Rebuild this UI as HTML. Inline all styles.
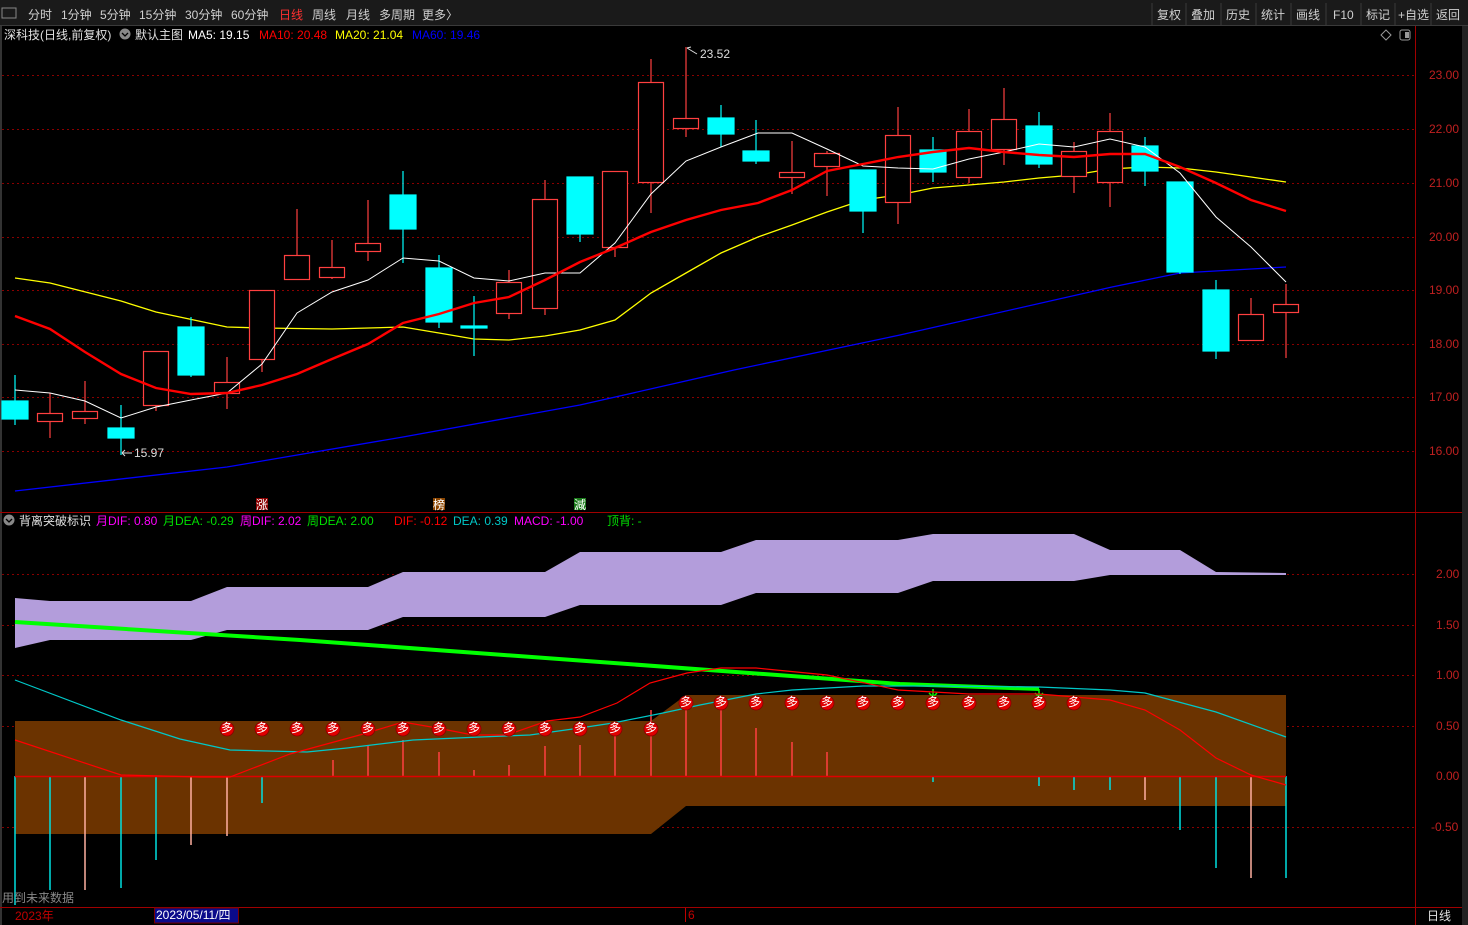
<!DOCTYPE html>
<html><head><meta charset="utf-8"><style>
html,body{margin:0;padding:0;background:#000;width:1468px;height:925px;overflow:hidden;font-family:"Liberation Sans","Noto Sans CJK SC",sans-serif;}
svg{display:block}
text{font-family:"Liberation Sans","Noto Sans CJK SC",sans-serif;font-size:12px}
</style></head><body>
<svg width="1468" height="925" viewBox="0 0 1468 925">
<rect width="1468" height="925" fill="#000"/>
<!-- top bar -->
<rect x="0" y="0" width="1468" height="25" fill="#1a1a1a"/>
<line x1="0" y1="25.5" x2="1468" y2="25.5" stroke="#3a3a3a"/>
<rect x="2" y="8" width="14" height="10" fill="none" stroke="#888" stroke-width="1"/>
<g fill="#d0d0d0">
<text x="28" y="19">分时</text><text x="61" y="19">1分钟</text><text x="100" y="19">5分钟</text><text x="139" y="19">15分钟</text><text x="185" y="19">30分钟</text><text x="231" y="19">60分钟</text>
<text x="279" y="19" fill="#ff3030">日线</text><text x="312" y="19">周线</text><text x="346" y="19">月线</text><text x="379" y="19">多周期</text><text x="422" y="19">更多〉</text>
<text x="1157" y="19">复权</text><text x="1191" y="19">叠加</text><text x="1226" y="19">历史</text><text x="1261" y="19">统计</text><text x="1296" y="19">画线</text><text x="1333" y="19">F10</text><text x="1366" y="19">标记</text><text x="1398" y="19">+自选</text><text x="1436" y="19">返回</text>
</g>
<g stroke="#3a3a3a"><line x1="1152" y1="3" x2="1152" y2="25"/><line x1="1186" y1="3" x2="1186" y2="25"/><line x1="1221" y1="3" x2="1221" y2="25"/><line x1="1256" y1="3" x2="1256" y2="25"/><line x1="1291" y1="3" x2="1291" y2="25"/><line x1="1326" y1="3" x2="1326" y2="25"/><line x1="1361" y1="3" x2="1361" y2="25"/><line x1="1395" y1="3" x2="1395" y2="25"/><line x1="1431" y1="3" x2="1431" y2="25"/></g>
<!-- frame -->
<rect x="0" y="26" width="2" height="899" fill="#333"/>
<rect x="1462" y="26" width="6" height="899" fill="#222"/>
<line x1="1415.5" y1="26" x2="1415.5" y2="925" stroke="#a00000"/>
<line x1="0" y1="512.5" x2="1462" y2="512.5" stroke="#a00000"/>
<line x1="0" y1="907.5" x2="1462" y2="907.5" stroke="#a00000"/>
<!-- legend -->
<text x="4" y="39" fill="#e0e0e0">深科技(日线,前复权)</text>
<circle cx="125" cy="34" r="5.5" fill="#888"/><path d="M122 33 l3 3 l3 -3" stroke="#000" fill="none" stroke-width="1.3"/>
<text x="135" y="39" fill="#e0e0e0">默认主图</text>
<text x="188" y="39" fill="#fff">MA5: 19.15</text>
<text x="259" y="39" fill="#ff0000">MA10: 20.48</text>
<text x="335" y="39" fill="#ffff00">MA20: 21.04</text>
<text x="412" y="39" fill="#0000ff">MA60: 19.46</text>
<path d="M1386 30 l5 5 l-5 5 l-5 -5 z" fill="none" stroke="#999"/>
<rect x="1400" y="30" width="10" height="10" rx="2" fill="none" stroke="#999"/><rect x="1405" y="32" width="4" height="6" fill="#999"/>
<!-- grid -->
<g stroke="#8a0000" stroke-dasharray="2,3">
<line x1="2" y1="75.5" x2="1415" y2="75.5"/><line x1="2" y1="129.5" x2="1415" y2="129.5"/><line x1="2" y1="183.5" x2="1415" y2="183.5"/><line x1="2" y1="237.5" x2="1415" y2="237.5"/><line x1="2" y1="290.5" x2="1415" y2="290.5"/><line x1="2" y1="344.5" x2="1415" y2="344.5"/><line x1="2" y1="397.5" x2="1415" y2="397.5"/><line x1="2" y1="451.5" x2="1415" y2="451.5"/>
<line x1="2" y1="574.5" x2="1415" y2="574.5"/><line x1="2" y1="625.5" x2="1415" y2="625.5"/><line x1="2" y1="675.5" x2="1415" y2="675.5"/><line x1="2" y1="726.5" x2="1415" y2="726.5"/><line x1="2" y1="827.5" x2="1415" y2="827.5"/>
</g>
<g fill="#c02020" font-size="12">
<text x="1429" y="79">23.00</text><text x="1429" y="133">22.00</text><text x="1429" y="187">21.00</text><text x="1429" y="241">20.00</text><text x="1429" y="294">19.00</text><text x="1429" y="348">18.00</text><text x="1429" y="401">17.00</text><text x="1429" y="455">16.00</text>
<text x="1436" y="578">2.00</text><text x="1436" y="629">1.50</text><text x="1436" y="679">1.00</text><text x="1436" y="730">0.50</text><text x="1436" y="780">0.00</text><text x="1431" y="831">-0.50</text>
</g>
<!-- MA lines -->
<polyline fill="none" stroke="#0000ff" stroke-width="1.3" points="15,491 227,467 403,437 580,405 734,370 900,335 1112,287 1180,273 1286,267"/>
<polyline fill="none" stroke="#ffff00" stroke-width="1.3" points="15,278 50,283 121,301 156,312 227,327 262,328 332,329 403,327 439,333 474,339 509,340 545,336 580,330 615,320 651,293 686,273 721,253 758,237 792,225 827,212 863,200 898,195 933,188 969,185 1004,182 1039,178 1074,175 1110,169 1145,167 1180,168 1216,172 1251,177 1286,182"/>
<!-- candles -->
<g stroke-width="1.2">
<g stroke="#00ffff" fill="#00ffff">
<line x1="15" y1="375" x2="15" y2="425"/><rect x="2" y="401" width="26" height="18"/>
<line x1="121" y1="405" x2="121" y2="455"/><rect x="108" y="428" width="26" height="10"/>
<line x1="191" y1="317" x2="191" y2="377"/><rect x="178" y="327" width="26" height="48"/>
<line x1="403" y1="171" x2="403" y2="263"/><rect x="390" y="195" width="26" height="34"/>
<line x1="439" y1="255" x2="439" y2="328"/><rect x="426" y="268" width="26" height="54"/>
<line x1="474" y1="296" x2="474" y2="356"/><rect x="461" y="326" width="26" height="2"/>
<line x1="580" y1="177" x2="580" y2="242"/><rect x="567" y="177" width="26" height="57"/>
<line x1="721" y1="105" x2="721" y2="147"/><rect x="708" y="118" width="26" height="16"/>
<line x1="756" y1="120" x2="756" y2="164"/><rect x="743" y="151" width="26" height="10"/>
<line x1="863" y1="170" x2="863" y2="233"/><rect x="850" y="170" width="26" height="41"/>
<line x1="933" y1="137" x2="933" y2="182"/><rect x="920" y="150" width="26" height="22"/>
<line x1="1039" y1="112" x2="1039" y2="168"/><rect x="1026" y="126" width="26" height="38"/>
<line x1="1145" y1="137" x2="1145" y2="186"/><rect x="1132" y="146" width="26" height="25"/>
<line x1="1180" y1="182" x2="1180" y2="274"/><rect x="1167" y="182" width="26" height="90"/>
<line x1="1216" y1="280" x2="1216" y2="359"/><rect x="1203" y="290" width="26" height="61"/>
</g>
<g stroke="#ff4040" fill="#000">
<line x1="50" y1="393" x2="50" y2="438"/><rect x="37.5" y="413.5" width="25" height="8"/>
<line x1="85" y1="381" x2="85" y2="424"/><rect x="72.5" y="411.5" width="25" height="7"/>
<line x1="156" y1="351" x2="156" y2="411"/><rect x="143.5" y="351.5" width="25" height="54"/>
<line x1="227" y1="357" x2="227" y2="409"/><rect x="214.5" y="382.5" width="25" height="11"/>
<line x1="262" y1="290" x2="262" y2="372"/><rect x="249.5" y="290.5" width="25" height="69"/>
<line x1="297" y1="209" x2="297" y2="280"/><rect x="284.5" y="255.5" width="25" height="24"/>
<line x1="332" y1="240" x2="332" y2="279"/><rect x="319.5" y="267.5" width="25" height="10"/>
<line x1="368" y1="200" x2="368" y2="261"/><rect x="355.5" y="243.5" width="25" height="8"/>
<line x1="509" y1="270" x2="509" y2="319"/><rect x="496.5" y="282.5" width="25" height="31"/>
<line x1="545" y1="180" x2="545" y2="315"/><rect x="532.5" y="199.5" width="25" height="109"/>
<line x1="615" y1="171" x2="615" y2="257"/><rect x="602.5" y="171.5" width="25" height="76"/>
<line x1="651" y1="59" x2="651" y2="213"/><rect x="638.5" y="82.5" width="25" height="100"/>
<line x1="686" y1="47" x2="686" y2="137"/><rect x="673.5" y="118.5" width="25" height="10"/>
<line x1="792" y1="141" x2="792" y2="194"/><rect x="779.5" y="172.5" width="25" height="5"/>
<line x1="827" y1="151" x2="827" y2="196"/><rect x="814.5" y="153.5" width="25" height="13"/>
<line x1="898" y1="107" x2="898" y2="224"/><rect x="885.5" y="135.5" width="25" height="67"/>
<line x1="969" y1="109" x2="969" y2="183"/><rect x="956.5" y="131.5" width="25" height="46"/>
<line x1="1004" y1="88" x2="1004" y2="165"/><rect x="991.5" y="119.5" width="25" height="30"/>
<line x1="1074" y1="142" x2="1074" y2="193"/><rect x="1061.5" y="151.5" width="25" height="25"/>
<line x1="1110" y1="113" x2="1110" y2="207"/><rect x="1097.5" y="131.5" width="25" height="51"/>
<line x1="1251" y1="298" x2="1251" y2="340"/><rect x="1238.5" y="314.5" width="25" height="26"/>
<line x1="1286" y1="284" x2="1286" y2="358"/><rect x="1273.5" y="304.5" width="25" height="8"/>
</g>
</g>
<polyline fill="none" stroke="#ffffff" stroke-width="1" points="15,390 50,393 85,401 121,418 156,407 191,400 227,393 262,364 297,313 332,292 368,280 403,258 439,261 474,278 509,281 545,273 580,273 615,243 651,194 686,161 721,147 758,133 792,133 827,149 863,166 898,168 933,169 969,159 1004,152 1039,144 1074,147 1110,139 1145,147 1180,173 1216,217 1251,247 1286,282"/>
<polyline fill="none" stroke="#ff0000" stroke-width="2.4" points="15,316 50,329 85,352 121,374 156,388 191,394 227,393 262,385 297,374 332,359 368,344 403,323 439,314 474,303 509,297 545,280 580,262 615,248 651,232 686,220 721,210 758,203 792,190 827,171 863,164 898,157 933,152 969,148 1004,152 1039,155 1074,157 1110,154 1145,154 1180,167 1216,183 1251,200 1286,211"/>
<text x="700" y="58" fill="#ddd">23.52</text><path d="M687 48 l10 6 M687 48 l4 -1" stroke="#ddd" fill="none"/>
<text x="134" y="457" fill="#ddd">15.97</text><path d="M122 453 h10 M122 453 l3 -3 M122 453 l3 3" stroke="#ddd" fill="none"/>
<!-- markers -->
<rect x="256" y="498" width="12" height="12" fill="#8b0000"/><text x="256" y="509" fill="#fff" font-size="11">涨</text>
<rect x="433" y="498" width="12" height="12" fill="#8b4500"/><text x="433" y="509" fill="#fff" font-size="11">榜</text>
<rect x="574" y="498" width="12" height="12" fill="#1a7a1a"/><text x="574" y="509" fill="#fff" font-size="11">減</text>
<!-- lower legend -->
<circle cx="9" cy="520" r="5.5" fill="#888"/><path d="M6 519 l3 3 l3 -3" stroke="#000" fill="none" stroke-width="1.3"/>
<text x="19" y="525" fill="#e0e0e0">背离突破标识</text>
<text x="96" y="525" fill="#ff00ff">月DIF: 0.80</text>
<text x="163" y="525" fill="#00e000">月DEA: -0.29</text>
<text x="240" y="525" fill="#ff00ff">周DIF: 2.02</text>
<text x="307" y="525" fill="#00e000">周DEA: 2.00</text>
<text x="394" y="525" fill="#ff0000">DIF: -0.12</text>
<text x="453" y="525" fill="#00c8c8">DEA: 0.39</text>
<text x="514" y="525" fill="#ff00ff">MACD: -1.00</text>
<text x="607" y="525" fill="#00e000">顶背: -</text>
<!-- purple band -->
<polygon fill="#b39ddb" points="15,598 50,601 191,601 227,587 368,587 403,572 545,572 580,552 721,552 756,540 898,540 933,534 1074,534 1110,550 1180,550 1216,572 1286,573 1286,575 1110,575 1074,581 933,581 898,593 756,593 721,605 580,605 545,617 403,617 368,630 227,630 191,640 50,640 15,648"/>
<!-- brown -->
<polygon fill="#6b3300" points="15,721 651,721 686,695 1286,695 1286,806 686,806 651,834 15,834"/>
<!-- green line -->
<polyline fill="none" stroke="#00ff00" stroke-width="4" points="15,622 300,640 600,662 900,684 1039,689"/>
<path d="M933 689 v8 M929 693 l4 4 l4 -4 M1039 689 v8 M1035 693 l4 4 l4 -4" stroke="#00ff00" fill="none" stroke-width="1.5"/>
<!-- histogram -->
<g stroke="#00e0e0" stroke-width="1.5">
<line x1="15" y1="776" x2="15" y2="905"/><line x1="50" y1="776" x2="50" y2="890"/><line x1="121" y1="776" x2="121" y2="888"/><line x1="156" y1="776" x2="156" y2="860"/><line x1="262" y1="776" x2="262" y2="803"/>
<line x1="933" y1="776" x2="933" y2="782"/><line x1="1039" y1="776" x2="1039" y2="786"/><line x1="1074" y1="776" x2="1074" y2="790"/><line x1="1110" y1="776" x2="1110" y2="790"/><line x1="1180" y1="776" x2="1180" y2="830"/><line x1="1216" y1="776" x2="1216" y2="868"/><line x1="1286" y1="776" x2="1286" y2="878"/>
</g>
<g stroke="#ffb0a0" stroke-width="1.5">
<line x1="85" y1="776" x2="85" y2="890"/><line x1="191" y1="776" x2="191" y2="845"/><line x1="227" y1="776" x2="227" y2="836"/><line x1="1145" y1="776" x2="1145" y2="800"/><line x1="1251" y1="776" x2="1251" y2="878"/>
</g>
<g stroke="#ff4040" stroke-width="1.5">
<line x1="333" y1="776" x2="333" y2="760"/><line x1="368" y1="776" x2="368" y2="745"/><line x1="403" y1="776" x2="403" y2="740"/><line x1="439" y1="776" x2="439" y2="752"/><line x1="474" y1="776" x2="474" y2="770"/><line x1="509" y1="776" x2="509" y2="765"/><line x1="545" y1="776" x2="545" y2="746"/><line x1="580" y1="776" x2="580" y2="745"/><line x1="615" y1="776" x2="615" y2="735"/><line x1="651" y1="776" x2="651" y2="710"/><line x1="686" y1="776" x2="686" y2="710"/><line x1="721" y1="776" x2="721" y2="706"/><line x1="756" y1="776" x2="756" y2="728"/><line x1="792" y1="776" x2="792" y2="742"/><line x1="827" y1="776" x2="827" y2="752"/>
</g>
<line x1="15" y1="776.5" x2="1286" y2="776.5" stroke="#e00000" stroke-width="1.5"/>
<polyline fill="none" stroke="#00c8c8" stroke-width="1.2" points="15,680 121,720 180,739 230,750 307,752 347,748 413,740 480,737 530,735 580,728 613,723 663,713 700,705 756,694 792,690 863,686 933,686 1039,687 1110,690 1145,693 1216,712 1286,737"/>
<polyline fill="none" stroke="#ff0000" stroke-width="1.2" points="15,740 121,775 200,777 230,777 290,754 367,733 403,722 437,728 473,735 507,735 547,721 580,717 617,703 650,683 687,673 721,668 756,668 827,675 898,690 969,694 1039,694 1110,700 1145,710 1180,730 1216,758 1251,775 1286,785"/>
<!-- 多 circles -->
<g font-size="9" text-anchor="middle">
<g fill="#e00000" stroke="#800" stroke-width="0.8">
<circle cx="227" cy="729" r="7"/><circle cx="262" cy="729" r="7"/><circle cx="297" cy="729" r="7"/><circle cx="333" cy="729" r="7"/><circle cx="368" cy="729" r="7"/><circle cx="403" cy="729" r="7"/><circle cx="439" cy="729" r="7"/><circle cx="474" cy="729" r="7"/><circle cx="509" cy="729" r="7"/><circle cx="545" cy="729" r="7"/><circle cx="580" cy="729" r="7"/><circle cx="615" cy="729" r="7"/><circle cx="651" cy="729" r="7"/>
<circle cx="686" cy="703" r="7"/><circle cx="721" cy="703" r="7"/><circle cx="756" cy="703" r="7"/><circle cx="792" cy="703" r="7"/><circle cx="827" cy="703" r="7"/><circle cx="863" cy="703" r="7"/><circle cx="898" cy="703" r="7"/><circle cx="933" cy="703" r="7"/><circle cx="969" cy="703" r="7"/><circle cx="1004" cy="703" r="7"/><circle cx="1039" cy="703" r="7"/><circle cx="1074" cy="703" r="7"/>
</g>
<g fill="#fff">
<text x="227" y="732">多</text><text x="262" y="732">多</text><text x="297" y="732">多</text><text x="333" y="732">多</text><text x="368" y="732">多</text><text x="403" y="732">多</text><text x="439" y="732">多</text><text x="474" y="732">多</text><text x="509" y="732">多</text><text x="545" y="732">多</text><text x="580" y="732">多</text><text x="615" y="732">多</text><text x="651" y="732">多</text>
<text x="686" y="706">多</text><text x="721" y="706">多</text><text x="756" y="706">多</text><text x="792" y="706">多</text><text x="827" y="706">多</text><text x="863" y="706">多</text><text x="898" y="706">多</text><text x="933" y="706">多</text><text x="969" y="706">多</text><text x="1004" y="706">多</text><text x="1039" y="706">多</text><text x="1074" y="706">多</text>
</g></g>
<text x="2" y="902" fill="#888">用到未来数据</text>
<!-- bottom axis -->
<text x="15" y="920" fill="#c00000">2023年</text>
<rect x="154.5" y="908" width="84" height="15" fill="#0a0a8a" stroke="#700"/>
<text x="156" y="919" fill="#fff">2023/05/11/四</text>
<line x1="685.5" y1="908" x2="685.5" y2="922" stroke="#c00000"/><text x="688" y="919" fill="#c00000">6</text>
<text x="1427" y="920" fill="#e0e0e0">日线</text>
</svg>
</body></html>
